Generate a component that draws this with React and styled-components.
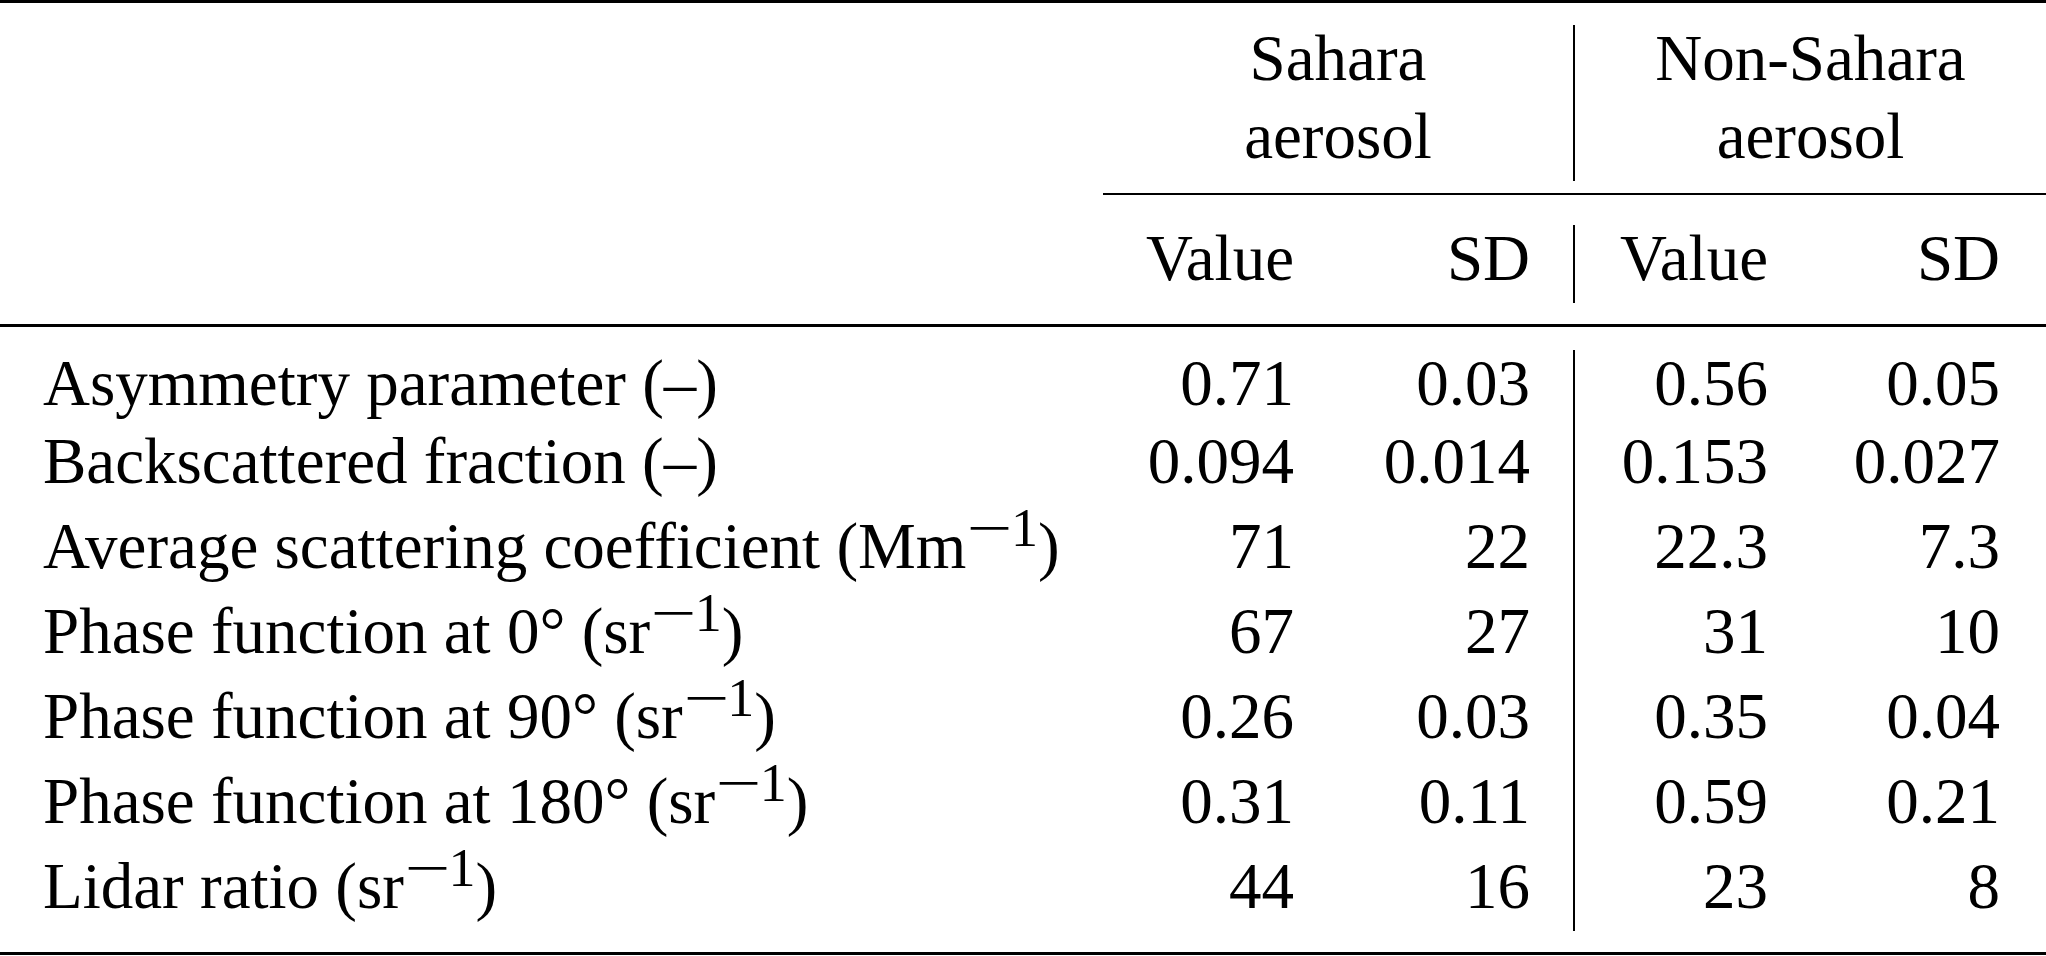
import React from 'react';
import styled, { createGlobalStyle } from 'styled-components';

const GlobalStyle = createGlobalStyle`
  html, body {
    margin: 0;
    padding: 0;
    background: #fff;
  }
  body {
    font-family: "Liberation Serif", "Times New Roman", serif;
    color: #000;
  }
`;

const COLUMNS = '1103px 231px 239px 235px 238px';
// right padding of the four number columns (Value, SD, Value, SD)
const PADS = [40, 43, 40, 46];

const rows = [
  { label: 'Asymmetry parameter (–)', values: ['0.71', '0.03', '0.56', '0.05'] },
  { label: 'Backscattered fraction (–)', values: ['0.094', '0.014', '0.153', '0.027'] },
  { label: 'Average scattering coefficient (Mm', unit: true, values: ['71', '22', '22.3', '7.3'] },
  { label: 'Phase function at 0° (sr', unit: true, values: ['67', '27', '31', '10'] },
  { label: 'Phase function at 90° (sr', unit: true, values: ['0.26', '0.03', '0.35', '0.04'] },
  { label: 'Phase function at 180° (sr', unit: true, values: ['0.31', '0.11', '0.59', '0.21'] },
  { label: 'Lidar ratio (sr', unit: true, values: ['44', '16', '23', '8'] },
];

const App = () => {
  return (
    <>
      <GlobalStyle />
      <Table>
        <Head>
          <Row>
            <Label />
            <GroupHead>
              <Line>Sahara</Line>
              <Line>aerosol</Line>
            </GroupHead>
            <GroupHead $divider>
              <Line>Non-Sahara</Line>
              <Line>aerosol</Line>
            </GroupHead>
          </Row>
          <CMidRule />
          <Row>
            <Label />
            {['Value', 'SD', 'Value', 'SD'].map((h, i) => (
              <Num key={i} $pad={PADS[i]} $divider={i === 2}>
                {h}
              </Num>
            ))}
          </Row>
        </Head>
        <Body>
          {rows.map((row) => (
            <Row key={row.label}>
              <Label $tall={row.unit}>
                {row.label}
                {row.unit && (
                  <>
                    <Sup>
                      <Minus>−</Minus>1
                    </Sup>
                    )
                  </>
                )}
              </Label>
              {row.values.map((v, i) => (
                <Num key={i} $tall={row.unit} $pad={PADS[i]} $divider={i === 2}>
                  {v}
                </Num>
              ))}
            </Row>
          ))}
        </Body>
      </Table>
    </>
  );
};

const Table = styled.div`
  width: 2046px;
  font-size: 65px;
  border-top: 3px solid #000;
  border-bottom: 3px solid #000;
`;

const Head = styled.div`
  padding: 22px 0 21px;
`;

const Body = styled.div`
  border-top: 3px solid #000;
  padding: 23px 0 21px;
`;

const Row = styled.div`
  display: grid;
  grid-template-columns: ${COLUMNS};
`;

const Cell = styled.div`
  box-sizing: border-box;
  height: ${(p) => (p.$tall ? 85 : 78)}px;
  padding-top: ${(p) => (p.$tall ? 7 : 0)}px;
  line-height: 66px;
  white-space: nowrap;
`;

const Label = styled(Cell)`
  padding-left: 43px;
  text-align: left;
`;

const Num = styled(Cell)`
  text-align: right;
  padding-right: ${(p) => p.$pad}px;
  border-left: ${(p) => (p.$divider ? '2px solid #000' : 'none')};
`;

const GroupHead = styled.div`
  grid-column: span 2;
  text-align: center;
  border-left: ${(p) => (p.$divider ? '2px solid #000' : 'none')};
`;

const Line = styled.div`
  height: 78px;
  line-height: 66px;
`;

const CMidRule = styled.div`
  margin: 12px 0 30px 1103px;
  border-top: 2px solid #000;
`;

const Sup = styled.span`
  font-size: 54px;
  line-height: 0;
  vertical-align: 22px;
`;

const Minus = styled.span`
  display: inline-block;
  transform: scaleX(1.5);
  margin: 0 6px 0 8px;
`;

export default App;
